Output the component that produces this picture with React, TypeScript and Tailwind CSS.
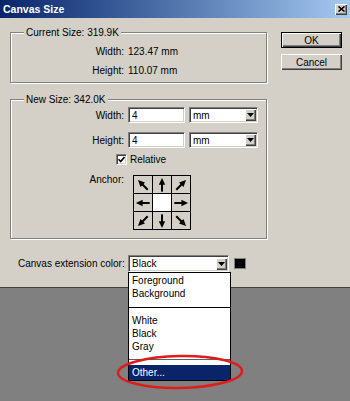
import React from "react";

const raised =
  "bg-[#d4d0c8] shadow-[inset_1px_1px_0_#fff,inset_-1px_-1px_0_#404040,inset_-2px_-2px_0_#808080]";
const sunken =
  "bg-white border border-t-[#808080] border-l-[#808080] border-b-white border-r-white shadow-[inset_1px_1px_0_#404040,inset_-1px_-1px_0_#d4d0c8]";
const etched =
  "border border-[#808080] shadow-[inset_1px_1px_0_#fff,1px_1px_0_#fff]";

function DropArrow({ className }: { className?: string }) {
  return (
    <div className={`${raised} flex items-center justify-center ${className ?? ""}`}>
      <svg width="7" height="4" viewBox="0 0 7 4">
        <polygon points="0,0 7,0 3.5,4" fill="#000" />
      </svg>
    </div>
  );
}

function Select({ value, className }: { value: string; className: string }) {
  return (
    <div className={`${sunken} flex items-center justify-between pl-[3px] pr-[1px] ${className}`}>
      <span>{value}</span>
      <DropArrow className="w-[11px] h-[12px]" />
    </div>
  );
}

function Arrow({ angle }: { angle: number }) {
  return (
    <svg width="16" height="16" viewBox="0 0 18 18">
      <g transform={`rotate(${angle} 9 9)`}>
        <rect x="7.9" y="7" width="2.2" height="9.5" fill="#000" />
        <polygon points="9,1 5.4,8.6 12.6,8.6" fill="#000" />
      </g>
    </svg>
  );
}

const anchors: (number | null)[] = [-45, 0, 45, -90, null, 90, -135, 180, 135];

function FieldRow({ label, children }: { label: string; children: React.ReactNode }) {
  return (
    <div className="flex items-center">
      <span className="w-[113px] text-right">{label}</span>
      <div className="ml-[4px] flex items-center">{children}</div>
    </div>
  );
}

export default function App() {
  return (
    <div className="relative w-[350px] h-[401px] overflow-hidden bg-[#808080] text-[10px] leading-[13px] text-black font-['Liberation_Sans',Arial,sans-serif]">
      <div className="w-[350px] h-[288px] bg-[#d4d0c8] border-b border-[#404040] flex flex-col">
        {/* title bar */}
        <div className="h-[18px] flex items-center justify-between pl-[3px] pr-[3px] bg-linear-to-r from-[#0a246a] to-[#a6caf0]">
          <span className="font-bold text-white text-[10.5px]">Canvas Size</span>
          <div className={`${raised} w-[12px] h-[11px] flex items-center justify-center`}>
            <svg width="7" height="6" viewBox="0 0 7 6">
              <path d="M0.5 0.5 L6.5 5.5 M6.5 0.5 L0.5 5.5" stroke="#000" strokeWidth="1.6" />
            </svg>
          </div>
        </div>

        <div className="flex pt-[8px] pl-[10px]">
          <div className="flex flex-col w-[257px]">
            <fieldset className={`${etched} h-[57px]`}>
              <legend className="ml-[13px] px-[2px] bg-[#d4d0c8]">Current Size: 319.9K</legend>
              <div className="flex flex-col gap-[6px] mt-[6px]">
                <FieldRow label="Width:">123.47 mm</FieldRow>
                <FieldRow label="Height:">110.07 mm</FieldRow>
              </div>
            </fieldset>

            <fieldset className={`${etched} h-[146px] mt-[10px]`}>
              <legend className="ml-[13px] px-[2px] bg-[#d4d0c8]">New Size: 342.0K</legend>
              <div className="flex flex-col mt-[1px]">
                <FieldRow label="Width:">
                  <div className={`${sunken} w-[57px] h-[16px] pl-[3px] flex items-center`}>4</div>
                  <Select value="mm" className="ml-[4px] w-[69px] h-[16px]" />
                </FieldRow>
                <div className="mt-[9px]">
                  <FieldRow label="Height:">
                    <div className={`${sunken} w-[57px] h-[16px] pl-[3px] flex items-center`}>4</div>
                    <Select value="mm" className="ml-[4px] w-[69px] h-[16px]" />
                  </FieldRow>
                </div>
                <div className="mt-[5px] flex items-center ml-[105px] h-[13px]">
                  <div className={`${sunken} w-[11px] h-[11px] flex items-center justify-center`}>
                    <svg width="7" height="7" viewBox="0 0 7 7">
                      <path d="M0.5 3.2 L2.7 5.5 L6.5 1" stroke="#000" strokeWidth="1.6" fill="none" />
                    </svg>
                  </div>
                  <span className="ml-[3px]">Relative</span>
                </div>
                <div className="mt-[7px] flex items-start">
                  <span className="w-[113px] text-right">Anchor:</span>
                  <div className="ml-[9px] mt-[2px] grid grid-cols-[repeat(3,18px)] grid-rows-[repeat(3,17px)] gap-px bg-black border border-black">
                    {anchors.map((a, i) => (
                      <div
                        key={i}
                        className={`flex items-center justify-center ${a === null ? "bg-white" : "bg-[#d4d0c8]"}`}
                      >
                        {a !== null && <Arrow angle={a} />}
                      </div>
                    ))}
                  </div>
                </div>
              </div>
            </fieldset>
          </div>

          <div className="ml-[14px] mt-[6px] flex flex-col gap-[6px]">
            <button className={`${raised} w-[61px] h-[16px] border border-black flex items-center justify-center`}>
              OK
            </button>
            <button className={`${raised} w-[61px] h-[16px] flex items-center justify-center`}>
              Cancel
            </button>
          </div>
        </div>

        <div className="flex items-center mt-[16px] pl-[18px]">
          <span className="w-[110px]">Canvas extension color:</span>
          <Select value="Black" className="w-[101px] h-[17px]" />
          <div className="ml-[5px] w-[12px] h-[11px] bg-black border border-[#808080]" />
        </div>
      </div>

      {/* open dropdown list */}
      <div className="absolute left-[128px] top-[272px] w-[103px] bg-white border border-black pt-[1px] flex flex-col">
        <div className="h-[13px] pl-[3px]">Foreground</div>
        <div className="h-[13px] pl-[3px]">Background</div>
        <div className="h-[14px] flex items-center">
          <div className="w-full h-px bg-black" />
        </div>
        <div className="h-[13px] pl-[3px]">White</div>
        <div className="h-[13px] pl-[3px]">Black</div>
        <div className="h-[13px] pl-[3px]">Gray</div>
        <div className="h-[12px] flex items-center">
          <div className="w-full h-px bg-[#606060]" />
        </div>
        <div className="h-[15px] pl-[3px] flex items-center bg-[#0a246a] text-white">Other...</div>
      </div>

      {/* red annotation ring */}
      <svg className="absolute left-0 top-0 pointer-events-none" width="350" height="401">
        <ellipse
          cx="180"
          cy="372"
          rx="62"
          ry="16"
          fill="none"
          stroke="#e01b1b"
          strokeWidth="2.5"
          transform="rotate(-1 180 372)"
        />
      </svg>
    </div>
  );
}
